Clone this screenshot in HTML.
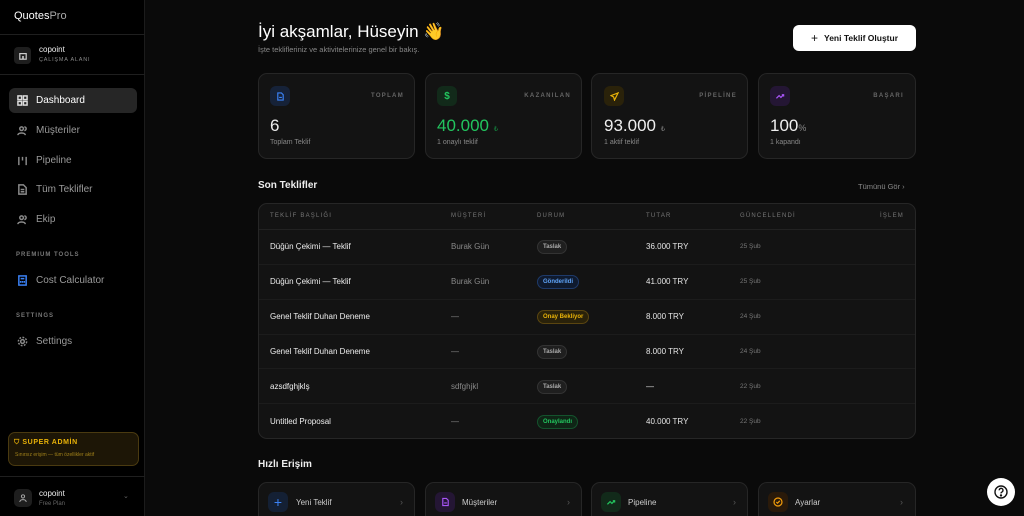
<!DOCTYPE html>
<html style="width:1024px;height:516px;overflow:hidden"><head><meta charset="utf-8"><style>
*{box-sizing:border-box;margin:0;padding:0}
body{width:1024px;height:516px;overflow:hidden;background:#0a0a0a;font-family:"Liberation Sans",sans-serif;color:#e5e5e5;position:relative}
.a{position:absolute}
.sb{left:0;top:0;width:145px;height:516px;background:#000;border-right:1px solid #1c1c1c}
.hr{height:1px;background:#1f1f1f;left:0;width:145px}
.nav{left:9px;width:128px;height:25px;border-radius:6px;display:flex;align-items:center;padding-left:8px;font-size:10px;color:#9a9a9a}
.nav svg{width:11px;height:11px;margin-right:8px;stroke:#8a8a8a;fill:none;stroke-width:1.6}
.sec{left:16px;font-size:6px;letter-spacing:1px;color:#777;font-weight:bold}
.card{background:#131313;border:1px solid #262626;border-radius:9px}
.ic{width:20px;height:20px;border-radius:6px;display:flex;align-items:center;justify-content:center}
.lab{font-size:6px;letter-spacing:1.3px;color:#666;font-weight:bold}
.big{font-size:17px;color:#eee}
.sub{font-size:7px;color:#888}
.th{font-size:6px;letter-spacing:1.2px;color:#777}
.td{font-size:8px}
.pill{font-size:6px;padding:3px 5px;border-radius:8px;font-weight:bold}
</style></head><body>
<div class="a sb"></div>
<div class="a" style="left:14px;top:10px;font-size:11px;color:#fff">Quotes<span style="color:#aaa">Pro</span></div>
<div class="a hr" style="top:34px"></div>
<div class="a" style="left:14px;top:47px;width:17px;height:17px;border-radius:4px;background:#1e1e1e;display:flex;align-items:center;justify-content:center"><svg width="8" height="8" viewBox="0 0 10 10"><rect x="1" y="2" width="8" height="7" fill="none" stroke="#ccc" stroke-width="1.5"/><rect x="4" y="5" width="2" height="4" fill="#ccc"/></svg></div>
<div class="a" style="left:39px;top:45px;font-size:8px;color:#eee">copoint</div>
<div class="a" style="left:39px;top:57px;font-size:5.5px;letter-spacing:.8px;color:#888">ÇALIŞMA ALANI</div>
<div class="a hr" style="top:74px"></div>
<div class="a nav" style="top:88px;background:#262626;color:#fff"><svg viewBox="0 0 12 12" style="stroke:#ddd"><rect x="1" y="1" width="4" height="4"/><rect x="7" y="1" width="4" height="4"/><rect x="1" y="7" width="4" height="4"/><rect x="7" y="7" width="4" height="4"/></svg>Dashboard</div>
<div class="a nav" style="top:118px"><svg viewBox="0 0 12 12"><circle cx="5" cy="4" r="2"/><path d="M1 11c0-3 8-3 8 0M8 2a2 2 0 010 4"/></svg>Müşteriler</div>
<div class="a nav" style="top:148px"><svg viewBox="0 0 12 12"><path d="M2 2v9M6 2v4M10 2v9"/></svg>Pipeline</div>
<div class="a nav" style="top:177px"><svg viewBox="0 0 12 12"><path d="M2 1h5l3 3v7H2zM4 6h4M4 8.5h4"/></svg>Tüm Teklifler</div>
<div class="a nav" style="top:207px"><svg viewBox="0 0 12 12"><circle cx="5" cy="4" r="2"/><path d="M1 11c0-3 8-3 8 0M8 2a2 2 0 010 4"/></svg>Ekip</div>
<div class="a sec" style="top:252px">PREMIUM TOOLS</div>
<div class="a nav" style="top:268px"><svg viewBox="0 0 12 12" style="stroke:#3b82f6"><rect x="2" y="1" width="8" height="10"/><path d="M4 4h4M4 6.5v2M6 6.5v2M8 6.5v2"/></svg>Cost Calculator</div>
<div class="a sec" style="top:313px">SETTINGS</div>
<div class="a nav" style="top:329px"><svg viewBox="0 0 12 12"><circle cx="6" cy="6" r="2"/><circle cx="6" cy="6" r="4.5" stroke-dasharray="2 1.5"/></svg>Settings</div>
<div class="a" style="left:8px;top:432px;width:131px;height:34px;border-radius:7px;background:#1d1606;border:1px solid #4a3a10"></div>
<div class="a" style="left:14px;top:439px;font-size:7px;font-weight:bold;color:#eab308;letter-spacing:.6px">⛉ SUPER ADMİN</div>
<div class="a" style="left:15px;top:452px;font-size:5px;color:#a0801a">Sınırsız erişim — tüm özellikler aktif</div>
<div class="a hr" style="top:476px"></div>
<div class="a" style="left:14px;top:489px;width:18px;height:18px;border-radius:5px;background:#1e1e1e;display:flex;align-items:center;justify-content:center"><svg width="8" height="8" viewBox="0 0 10 10" fill="none" stroke="#aaa" stroke-width="1.2"><circle cx="5" cy="3" r="2"/><path d="M1 10c0-4 8-4 8 0"/></svg></div>
<div class="a" style="left:39px;top:489px;font-size:8px;color:#eee">copoint</div>
<div class="a" style="left:39px;top:501px;font-size:6px;color:#666">Free Plan</div>
<div class="a" style="left:123px;top:492px;font-size:7px;color:#666">⌄</div>

<div class="a" style="left:258px;top:22px;font-size:17px;color:#fff">İyi akşamlar, Hüseyin 👋</div>
<div class="a" style="left:258px;top:45px;font-size:7.5px;color:#888">İşte teklifleriniz ve aktivitelerinize genel bir bakış.</div>
<div class="a" style="left:793px;top:25px;width:123px;height:26px;border-radius:6px;background:#fff;color:#111;font-size:8.5px;font-weight:bold;display:flex;align-items:center;justify-content:center"><span style="font-size:12px;font-weight:normal;margin-right:6px">+</span>Yeni Teklif Oluştur</div>

<div class="a card" style="left:258px;top:73px;width:157px;height:86px"></div>
<div class="a card" style="left:425px;top:73px;width:157px;height:86px"></div>
<div class="a card" style="left:591px;top:73px;width:157px;height:86px"></div>
<div class="a card" style="left:758px;top:73px;width:158px;height:86px"></div>
<div class="a ic" style="left:270px;top:86px;background:#162238"><svg width="9" height="9" viewBox="0 0 10 10" fill="none" stroke="#3b82f6" stroke-width="1.3"><path d="M2 1h4l2 2v6H2zM3.5 6h3"/></svg></div>
<div class="a ic" style="left:437px;top:86px;background:#122a1a;color:#22c55e;font-size:10px;font-weight:bold">$</div>
<div class="a ic" style="left:604px;top:86px;background:#2a220a"><svg width="9" height="9" viewBox="0 0 10 10" fill="none" stroke="#eab308" stroke-width="1.3"><path d="M9 1L1 4l3 1.5L5 9z"/></svg></div>
<div class="a ic" style="left:770px;top:86px;background:#241634"><svg width="10" height="9" viewBox="0 0 10 10" fill="none" stroke="#a855f7" stroke-width="1.4"><path d="M1 7l3-3 2 2 3-3M7 3h2v2"/></svg></div>
<div class="a lab" style="right:620px;top:93px">TOPLAM</div>
<div class="a lab" style="right:453px;top:93px">KAZANILAN</div>
<div class="a lab" style="right:287px;top:93px">PİPELİNE</div>
<div class="a lab" style="right:120px;top:93px">BAŞARI</div>
<div class="a big" style="left:270px;top:116px">6</div>
<div class="a big" style="left:437px;top:116px;color:#22c55e">40.000 <span style="font-size:7px;color:#15803d">₺</span></div>
<div class="a big" style="left:604px;top:116px">93.000 <span style="font-size:7px;color:#777">₺</span></div>
<div class="a big" style="left:770px;top:116px">100<span style="font-size:9px;color:#888">%</span></div>
<div class="a sub" style="left:270px;top:139px">Toplam Teklif</div>
<div class="a sub" style="left:437px;top:139px">1 onaylı teklif</div>
<div class="a sub" style="left:604px;top:139px">1 aktif teklif</div>
<div class="a sub" style="left:770px;top:139px">1 kapandı</div>

<div class="a" style="left:258px;top:180px;font-size:10px;font-weight:bold;color:#eee">Son Teklifler</div>
<div class="a" style="left:858px;top:182px;font-size:7.5px;color:#888">Tümünü Gör ›</div>
<div class="a card" style="left:258px;top:203px;width:658px;height:236px"></div>
<div class="a th" style="left:270px;top:213px">TEKLİF BAŞLIĞI</div>
<div class="a th" style="left:451px;top:213px">MÜŞTERİ</div>
<div class="a th" style="left:537px;top:213px">DURUM</div>
<div class="a th" style="left:646px;top:213px">TUTAR</div>
<div class="a th" style="left:740px;top:213px">GÜNCELLENDİ</div>
<div class="a th" style="right:120px;top:213px">İŞLEM</div>
<div class="a" style="left:259px;top:229px;width:656px;height:1px;background:#222"></div>
<div class="a" style="left:259px;top:264px;width:656px;height:1px;background:#1c1c1c"></div>
<div class="a" style="left:259px;top:299px;width:656px;height:1px;background:#1c1c1c"></div>
<div class="a" style="left:259px;top:334px;width:656px;height:1px;background:#1c1c1c"></div>
<div class="a" style="left:259px;top:368px;width:656px;height:1px;background:#1c1c1c"></div>
<div class="a" style="left:259px;top:403px;width:656px;height:1px;background:#1c1c1c"></div>

<div class="a td" style="left:270px;top:242px;color:#eee">Düğün Çekimi — Teklif</div>
<div class="a td" style="left:451px;top:242px;color:#888">Burak Gün</div>
<div class="a pill" style="left:537px;top:240px;background:#1f1f1f;border:1px solid #333;color:#aaa">Taslak</div>
<div class="a td" style="left:646px;top:242px">36.000 TRY</div>
<div class="a" style="left:740px;top:243px;font-size:6.5px;color:#777">25 Şub</div>

<div class="a td" style="left:270px;top:277px;color:#eee">Düğün Çekimi — Teklif</div>
<div class="a td" style="left:451px;top:277px;color:#888">Burak Gün</div>
<div class="a pill" style="left:537px;top:275px;background:#0f1a2e;border:1px solid #1e3a6a;color:#60a5fa">Gönderildi</div>
<div class="a td" style="left:646px;top:277px">41.000 TRY</div>
<div class="a" style="left:740px;top:278px;font-size:6.5px;color:#777">25 Şub</div>

<div class="a td" style="left:270px;top:312px;color:#eee">Genel Teklif Duhan Deneme</div>
<div class="a td" style="left:451px;top:312px;color:#888">—</div>
<div class="a pill" style="left:537px;top:310px;background:#2a220a;border:1px solid #5a4510;color:#eab308">Onay Bekliyor</div>
<div class="a td" style="left:646px;top:312px">8.000 TRY</div>
<div class="a" style="left:740px;top:313px;font-size:6.5px;color:#777">24 Şub</div>

<div class="a td" style="left:270px;top:347px;color:#eee">Genel Teklif Duhan Deneme</div>
<div class="a td" style="left:451px;top:347px;color:#888">—</div>
<div class="a pill" style="left:537px;top:345px;background:#1f1f1f;border:1px solid #333;color:#aaa">Taslak</div>
<div class="a td" style="left:646px;top:347px">8.000 TRY</div>
<div class="a" style="left:740px;top:348px;font-size:6.5px;color:#777">24 Şub</div>

<div class="a td" style="left:270px;top:382px;color:#eee">azsdfghjklş</div>
<div class="a td" style="left:451px;top:382px;color:#888">sdfghjkl</div>
<div class="a pill" style="left:537px;top:380px;background:#1f1f1f;border:1px solid #333;color:#aaa">Taslak</div>
<div class="a td" style="left:646px;top:382px">—</div>
<div class="a" style="left:740px;top:383px;font-size:6.5px;color:#777">22 Şub</div>

<div class="a td" style="left:270px;top:417px;color:#eee">Untitled Proposal</div>
<div class="a td" style="left:451px;top:417px;color:#888">—</div>
<div class="a pill" style="left:537px;top:415px;background:#0f2516;border:1px solid #14532d;color:#22c55e">Onaylandı</div>
<div class="a td" style="left:646px;top:417px">40.000 TRY</div>
<div class="a" style="left:740px;top:418px;font-size:6.5px;color:#777">22 Şub</div>

<div class="a" style="left:258px;top:459px;font-size:10px;font-weight:bold;color:#eee">Hızlı Erişim</div>
<div class="a card" style="left:258px;top:482px;width:157px;height:50px"></div>
<div class="a card" style="left:425px;top:482px;width:157px;height:50px"></div>
<div class="a card" style="left:591px;top:482px;width:157px;height:50px"></div>
<div class="a card" style="left:758px;top:482px;width:158px;height:50px"></div>
<div class="a ic" style="left:268px;top:492px;background:#142034;color:#3b82f6;font-size:14px">+</div>
<div class="a ic" style="left:435px;top:492px;background:#241634"><svg width="9" height="10" viewBox="0 0 10 10" fill="none" stroke="#a855f7" stroke-width="1.3"><path d="M2 1h4l2 2v6H2zM3.5 6h3"/></svg></div>
<div class="a ic" style="left:601px;top:492px;background:#122a1a"><svg width="10" height="9" viewBox="0 0 10 10" fill="none" stroke="#22c55e" stroke-width="1.4"><path d="M1 7l3-3 2 2 3-3M7 3h2v2"/></svg></div>
<div class="a ic" style="left:768px;top:492px;background:#2a1a0a"><svg width="10" height="10" viewBox="0 0 10 10" fill="none" stroke="#f59e0b" stroke-width="1.2"><circle cx="5" cy="5" r="4"/><path d="M3.3 5l1.2 1.2L6.8 3.8"/></svg></div>
<div class="a td" style="left:296px;top:498px;color:#ccc">Yeni Teklif</div>
<div class="a td" style="left:462px;top:498px;color:#ccc">Müşteriler</div>
<div class="a td" style="left:628px;top:498px;color:#ccc">Pipeline</div>
<div class="a td" style="left:795px;top:498px;color:#ccc">Ayarlar</div>
<div class="a" style="left:400px;top:497px;font-size:9px;color:#555">›</div>
<div class="a" style="left:567px;top:497px;font-size:9px;color:#555">›</div>
<div class="a" style="left:733px;top:497px;font-size:9px;color:#555">›</div>
<div class="a" style="left:900px;top:497px;font-size:9px;color:#555">›</div>
<div class="a" style="left:987px;top:478px;width:28px;height:28px;border-radius:50%;background:#fff;display:flex;align-items:center;justify-content:center"><svg width="14" height="14" viewBox="0 0 14 14" fill="none" stroke="#111" stroke-width="1.4"><circle cx="7" cy="7" r="6"/><path d="M5.2 5.3a1.9 1.9 0 113 1.5c-.8.5-1.2.8-1.2 1.6"/><circle cx="7" cy="10.4" r=".5" fill="#111"/></svg></div>
</body></html>
